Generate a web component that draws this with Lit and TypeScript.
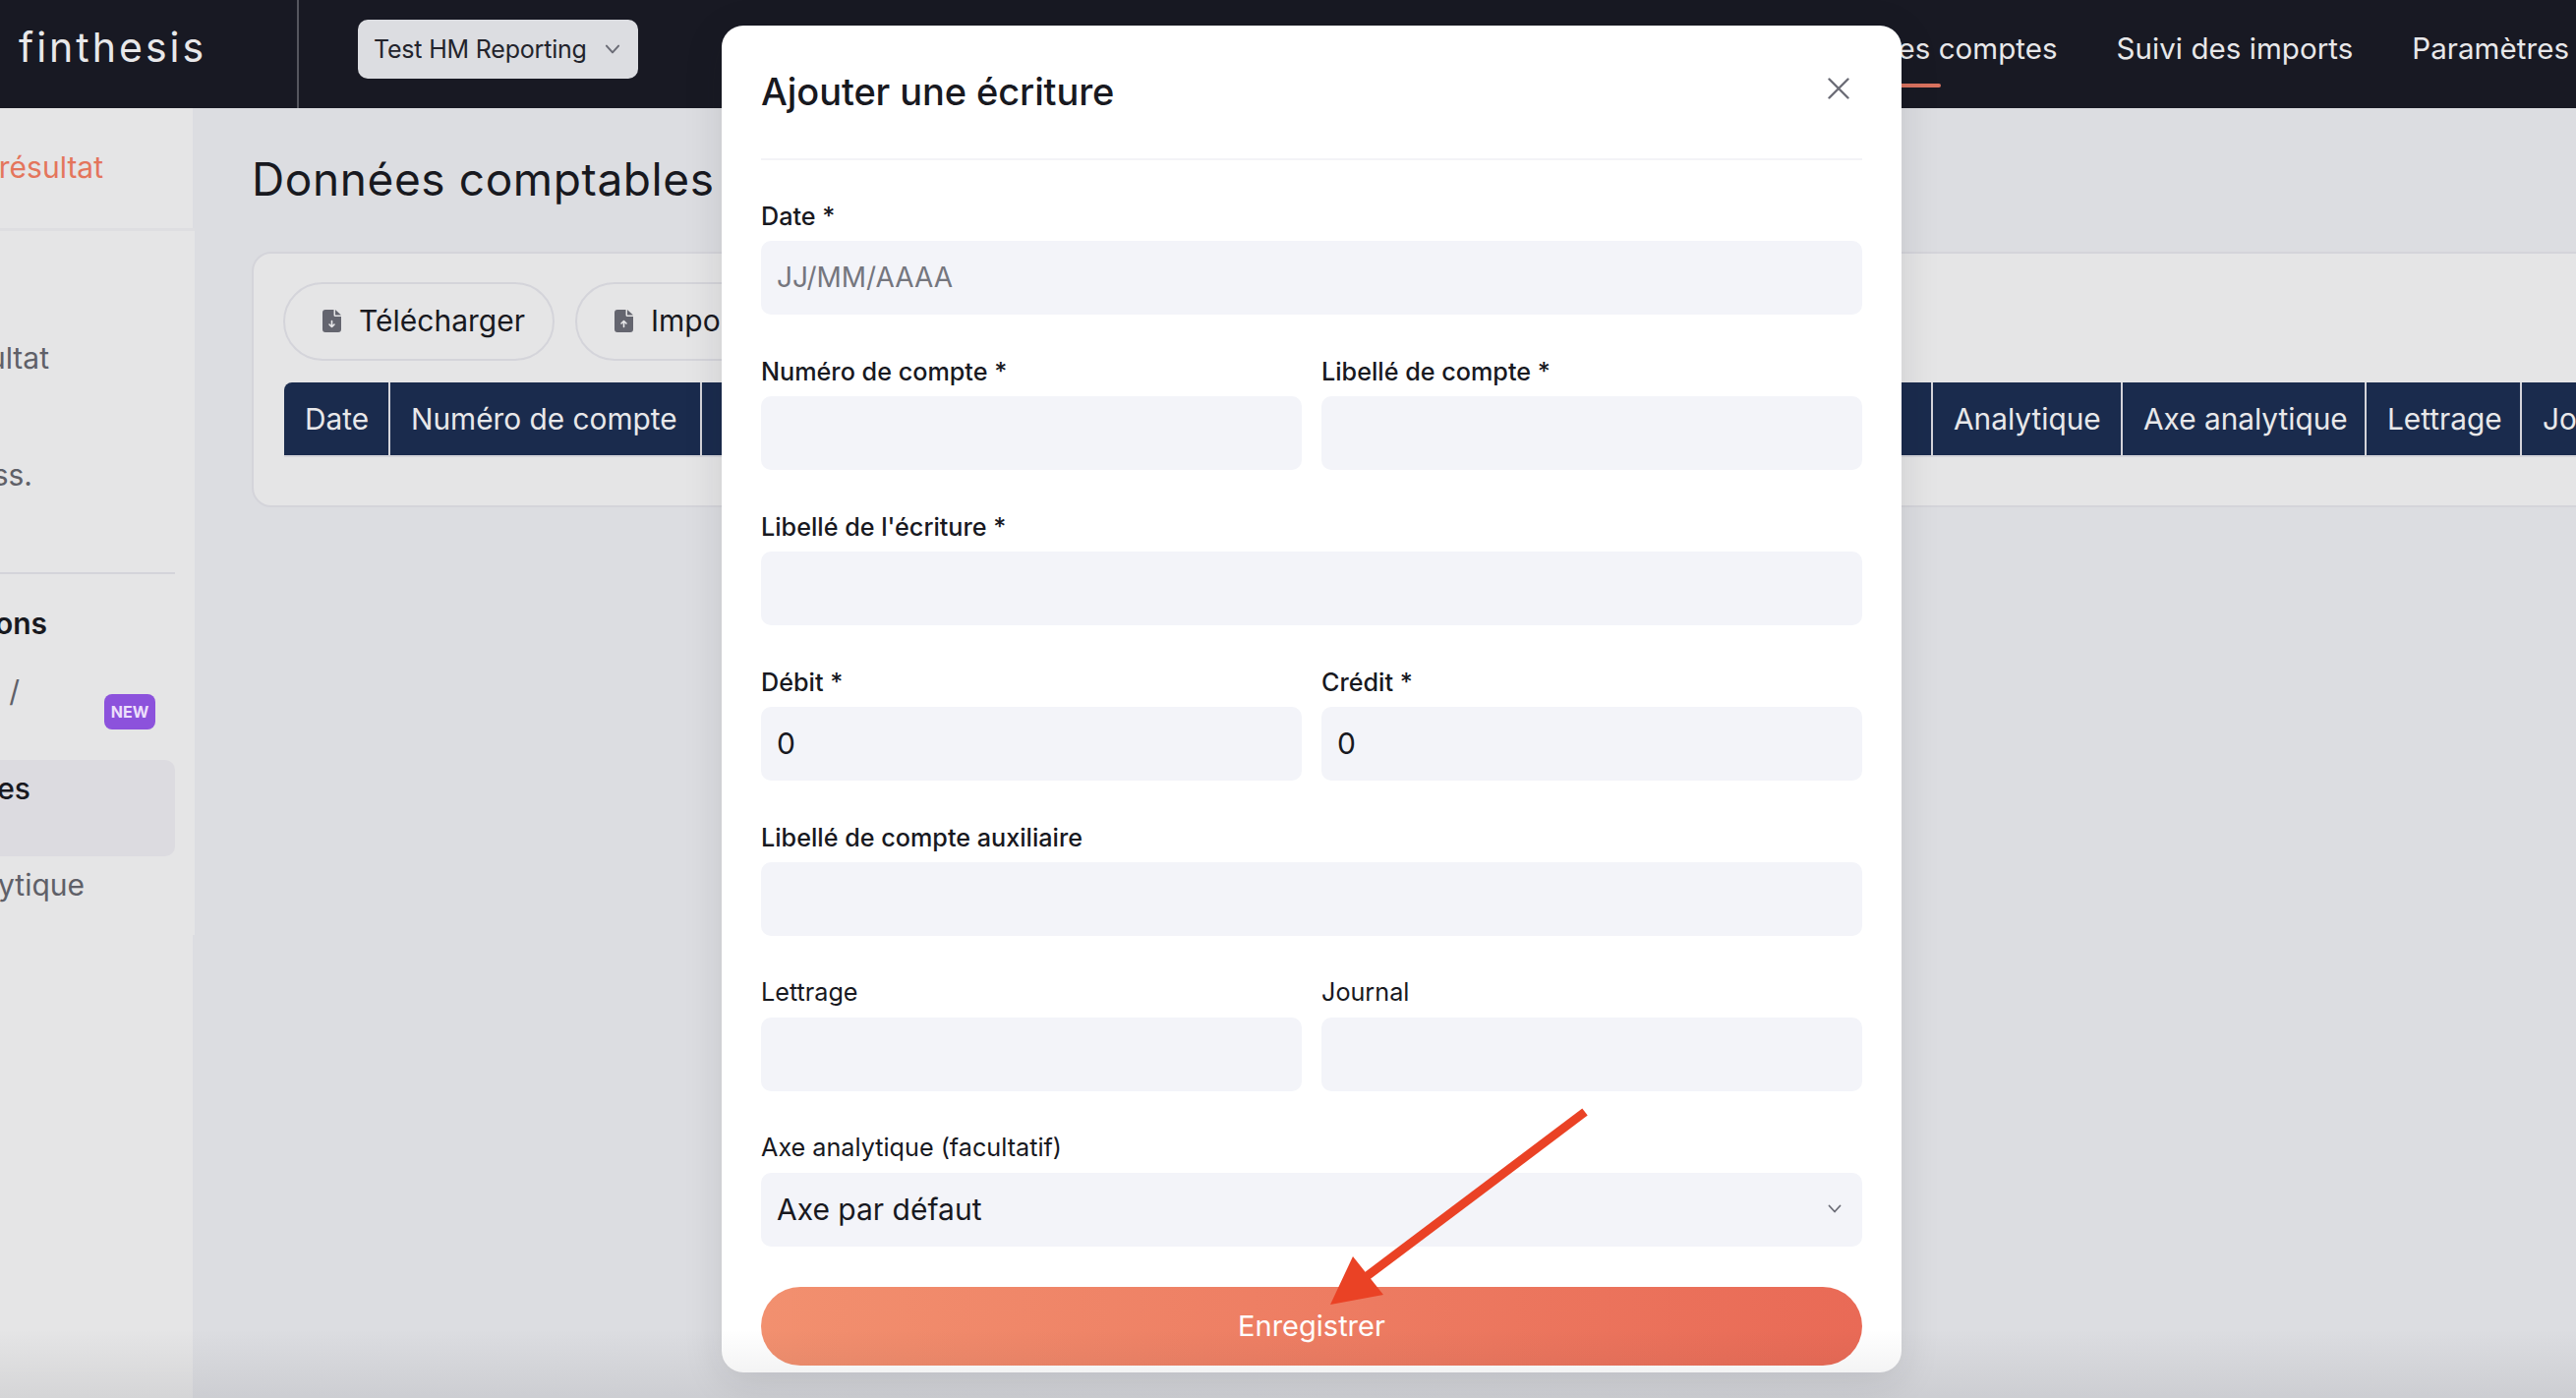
import { LitElement, html, css, svg } from "lit";
import { customElement } from "lit/decorators.js";

const F = `Inter, "Liberation Sans", sans-serif`;

const docIcon = (up: boolean) => html`<svg class="doc" viewBox="0 0 19 23">
  <path fill="#64656f" d="M3 0h8.5v5.5a1.5 1.5 0 0 0 1.5 1.5h6v13a3 3 0 0 1-3 3H3a3 3 0 0 1-3-3V3a3 3 0 0 1 3-3z"/>
  <path fill="#64656f" d="M13 0l6 5.5h-6z"/>
  <path fill="none" stroke="#e8e8ea" stroke-width="1.6" stroke-linecap="round" stroke-linejoin="round"
    d="${up ? "M9.5 17.5v-6M7 14l2.5-2.5L12 14" : "M9.5 11.5v6M7 15l2.5 2.5L12 15"}"/>
</svg>`;

const chevron = (cls: string) => html`<svg class="${cls}" viewBox="0 0 14 9"><path d="M1.5 1.5 7 7.5l5.5-6" fill="none" stroke="currentColor" stroke-width="1.8" stroke-linecap="round" stroke-linejoin="round"/></svg>`;

const columns: [string, number][] = [
  ["Date", 108],
  ["Numéro de compte", 316.5],
  ["Libellé de compte", 300],
  ["Libellé", 300],
  ["Débit", 150],
  ["Crédit", 150],
  ["Solde", 352.5],
  ["Analytique", 193],
  ["Axe analytique", 248],
  ["Lettrage", 158],
  ["Journal", 200],
];

@customElement("app-root")
export class AppRoot extends LitElement {
  static styles = css`
    :host { display: block; position: relative; width: 2620px; height: 1422px; overflow: hidden; background: #dcdde1; font-family: ${css([F] as any)}; color: #18191f; }
    * { box-sizing: border-box; }
    header { height: 110px; padding-bottom: 10px; background: #181923; display: flex; align-items: center; color: #e8e8ea; }
    .logo { align-self: flex-start; width: 304px; height: 110px; border-right: 2px solid #55565e; padding-left: 19px; font-size: 41px; line-height: 96px; letter-spacing: 3px; font-weight: 400; }
    .account { margin-left: 60px; width: 285px; height: 60px; background: #dcdde1; border-radius: 10px; display: flex; align-items: center; padding: 0 16px; color: #23242c; font-size: 25px; letter-spacing: -0.2px; }
    .account .name { flex: 1; white-space: nowrap; }
    .chev-a { width: 16px; height: 10px; color: #6b6c76; margin-right: 2px; }
    nav { margin: 0 0 3px auto; display: flex; gap: 60px; padding-right: 7px; font-size: 29.5px; letter-spacing: 0.05px; white-space: nowrap; }
    .nav-item { position: relative; }
    .nav-item.active::after { content: ""; position: absolute; left: 0; right: 119px; top: 54px; height: 4px; background: #d9725f; border-radius: 2px; }

    .body { display: flex; height: 1312px; }
    aside { width: 196px; flex: none; background: #e5e5e6; overflow: visible; font-size: 30px; color: #5f6068; }
    .side-top { height: 122px; padding-top: 40px; border-bottom: 0; }
    .sep-top { height: 3px; background: #dedee1; margin-right: -2px; }
    .side-nav { width: 198px; height: 716px; background: #e5e5e6; padding-top: 109px; position: relative; }
    .it { height: 40px; line-height: 40px; display: flex; justify-content: flex-end; white-space: nowrap; overflow: hidden; position: relative; width: 196px; }
    .it.red { color: #e4755c; padding-right: 91px; }
    .it.a { padding-right: 146px; }
    .it.b { margin-top: 79px; padding-right: 163px; }
    .rule { height: 2px; background: #d4d4da; margin: 79px 20px 0 0; }
    .it.head { margin-top: 30px; padding-right: 148px; color: #18191f; font-weight: 600; }
    .it.slash { margin-top: 29px; padding-right: 176px; overflow: visible; }
    .slash-wrap { position: relative; }
    .new { position: absolute; left: 106px; top: 23px; width: 52px; height: 36px; border-radius: 8px; background: #8c52dc; color: #ecdffb; font-size: 16px; font-weight: 700; line-height: 36px; text-align: center; }
    .active-box { margin-top: 50px; height: 98px; width: 178px; padding-top: 9px; background: #dcdbe0; border-radius: 0 10px 10px 0; }
    .active-box .it { width: 178px; color: #18191f; padding-right: 147px; font-weight: 500; }
    .it.d { margin-top: 9px; padding-right: 110px; }

    main { flex: 1; min-width: 0; padding: 42px 0 0 61px; overflow: hidden; }
    h1 { margin: 0 0 44px -1px; font-size: 46px; line-height: 60px; font-weight: 400; white-space: nowrap; letter-spacing: 0.6px; }
    .card { width: 2460px; height: 260px; margin-left: -1px; background: #e5e5e6; border: 2px solid #d4d4da; border-radius: 20px; padding: 29px 0 0 30px; }
    .tools { display: flex; gap: 21px; }
    .tool { height: 80px; border: 2px solid #d4d4da; border-radius: 40px; display: flex; align-items: center; gap: 18px; padding: 0 31px 2px 38px; font-size: 30px; white-space: nowrap; width: 276px; }
    .doc { width: 19px; height: 23px; flex: none; }
    .thead { margin-top: 22px; display: flex; height: 76px; background: #1a2b4d; border-bottom: 2px solid #d4d4da; border-radius: 8px 0 0 0; color: #e8e8ea; font-size: 29.8px; white-space: nowrap; margin-left: 1px; }
    .th { flex: none; height: 74px; line-height: 74px; padding-left: 21px; border-right: 2px solid #d4d4da; overflow: hidden; }

    .modal { position: absolute; left: 734px; top: 26px; width: 1200px; height: 1370px; background: #fff; border-radius: 22px; padding: 40px 40px 0; overflow: hidden; box-shadow: 0 8px 40px rgba(24,25,35,.12); }
    .shade { position: absolute; left: 0; right: 0; bottom: 0; height: 70px; pointer-events: none; background: linear-gradient(rgba(24,25,35,0), rgba(24,25,35,.08)); }
    .mhead { display: flex; align-items: center; justify-content: space-between; height: 97px; padding-bottom: 41px; border-bottom: 2px solid #f3f3f7; }
    .mhead h2 { margin: 0; font-size: 38px; line-height: 54px; font-weight: 500; letter-spacing: -0.1px; }
    .close { width: 22px; height: 22px; margin: 0 13px 6px 0; color: #6b6c76; }
    form { display: grid; grid-template-columns: 1fr 1fr; column-gap: 20px; row-gap: 39px; padding-top: 38px; }
    .wide { grid-column: 1 / -1; }
    label { display: block; font-size: 25.2px; line-height: 38px; height: 36px; margin-bottom: 8px; font-weight: 500; white-space: nowrap; }
    label.plain { font-weight: 400; line-height: 36px; }
    .field { height: 75px; background: #f3f4f9; border-radius: 10px; padding: 0 16px 2px; display: flex; align-items: center; justify-content: space-between; font-size: 30px; }
    .ph { color: #75767e; font-size: 28px; font-weight: 400; }
    .chev-b { width: 14px; height: 9px; color: #6b6c76; margin-right: 5px; }
    .save { margin-top: 41px; height: 80px; padding-bottom: 1px; border-radius: 40px; background: linear-gradient(90deg, #f2906f, #e96a56); color: #fff; font-size: 29px; display: flex; align-items: center; justify-content: center; }
    .arrow { position: absolute; left: 1340px; top: 1120px; width: 290px; height: 220px; }
  `;

  field(labelText: string, cls = "", content: unknown = "", plain = false) {
    return html`<div class="${cls}"><label class="${plain ? "plain" : ""}">${labelText}</label><div class="field">${content}</div></div>`;
  }

  render() {
    return html`
      <header>
        <div class="logo">finthesis</div>
        <div class="account"><span class="name">Test HM Reporting</span>${chevron("chev-a")}</div>
        <nav>
          <span class="nav-item">Tableau de bord</span>
          <span class="nav-item active">Plan des comptes</span>
          <span class="nav-item">Suivi des imports</span>
          <span class="nav-item">Paramètres</span>
        </nav>
      </header>
      <div class="body">
        <aside>
          <div class="side-top"><div class="it red">Compte de résultat</div></div>
          <div class="sep-top"></div>
          <div class="side-nav">
            <div class="it a">Résultat</div>
            <div class="it b">Synth. class.</div>
            <div class="rule"></div>
            <div class="it head">Opérations</div>
            <div class="slash-wrap">
              <div class="it slash">Imports /</div>
              <span class="new">NEW</span>
            </div>
            <div class="active-box"><div class="it">Données</div></div>
            <div class="it d">Axe analytique</div>
          </div>
        </aside>
        <main>
          <h1>Données comptables</h1>
          <div class="card">
            <div class="tools">
              <div class="tool">${docIcon(false)}Télécharger</div>
              <div class="tool">${docIcon(true)}Importer</div>
            </div>
            <div class="thead">
              ${columns.map(([t, w]) => html`<div class="th" style="width:${w}px">${t}</div>`)}
            </div>
          </div>
        </main>
      </div>
      <div class="modal">
        <div class="mhead">
          <h2>Ajouter une écriture</h2>
          <svg class="close" viewBox="0 0 22 22"><path d="M1.5 1.5l19 19M20.5 1.5l-19 19" stroke="currentColor" stroke-width="2.4" stroke-linecap="round"/></svg>
        </div>
        <form>
          ${this.field("Date *", "wide", html`<span class="ph">JJ/MM/AAAA</span>`)}
          ${this.field("Numéro de compte *")}
          ${this.field("Libellé de compte *")}
          ${this.field("Libellé de l'écriture *", "wide")}
          ${this.field("Débit *", "", "0")}
          ${this.field("Crédit *", "", "0")}
          ${this.field("Libellé de compte auxiliaire", "wide")}
          ${this.field("Lettrage", "", "", true)}
          ${this.field("Journal", "", "", true)}
          ${this.field("Axe analytique (facultatif)", "wide", html`<span>Axe par défaut</span>${chevron("chev-b")}`, true)}
        </form>
        <div class="save">Enregistrer</div>
      </div>
      <div class="shade"></div>
      <svg class="arrow" viewBox="1340 1120 290 220">
        ${svg`<path d="M1612 1131 1385 1302" stroke="#ea4225" stroke-width="9" fill="none"/>
        <polygon points="1353,1327 1376,1278 1407,1317" fill="#ea4225"/>`}
      </svg>
    `;
  }
}
